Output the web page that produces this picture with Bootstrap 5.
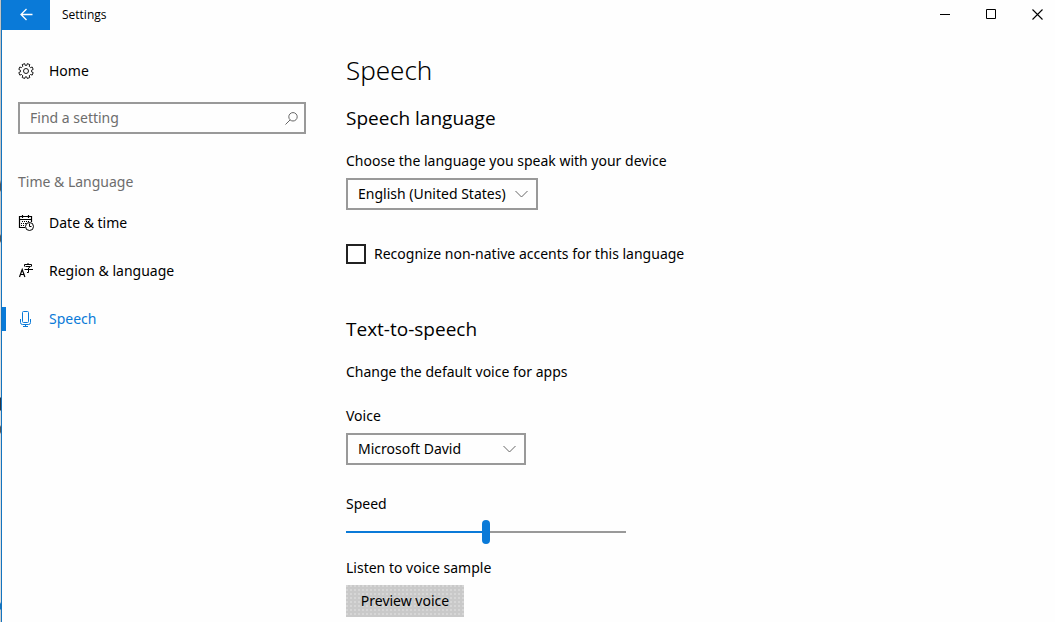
<!DOCTYPE html>
<html lang="en">
<head>
<meta charset="utf-8">
<meta name="viewport" content="width=device-width, initial-scale=1">
<title>Settings</title>
<link href="https://cdn.jsdelivr.net/npm/bootstrap@5.3.0/dist/css/bootstrap.min.css" rel="stylesheet">
<style>
:root { --accent: #0a7ad8; --edge: #999; }
body { font-family: "Noto Sans", "Open Sans", sans-serif; font-size: 14px; line-height: 20px; color: #000; background: #fff; overflow: hidden; }
.window { border-left: 1px solid #1474bf; margin-left: 1px; background: #fefefe; }
.desktop-edge { background: linear-gradient(#c4c4c4 0 180px, #555 184px 190px, #c4c4c4 192px 234px, #555 236px 241px, #ddd 243px 397px, #2a3442 398px 410px, #ddd 411px 425px, #555 427px 432px, #ddd 434px 602px, #1474bf 604px 609px, #ccc 610px); }
.titlebar { height: 30px; font-family: "Open Sans", "Noto Sans", sans-serif; font-size: 12px; }
.back { width: 48px; background: var(--accent); }
.caption { width: 46px; }
.plain { border: 0; padding: 0 0 2px; background: transparent; color: #000; }
.back.plain { background: var(--accent); color: #fff; }
.sidebar { width: 320px; padding: 17px 16px 0; }
.side-link { height: 48px; padding: 0 16px; margin: 0 -16px; gap: 15px; color: #000; text-decoration: none; border-radius: 0; }
.side-link.current { color: var(--accent); position: relative; }
.side-link.current::before { content: ""; position: absolute; left: 0; top: 12px; width: 4px; height: 24px; background: var(--accent); }
.search { height: 32px; border: 2px solid var(--edge); margin: 7px 0 38px; padding: 0 6px 0 10px; }
.search input { border: 0; padding: 0; background: transparent; border-radius: 0; font-size: 14px; line-height: 20px; }
.search input:focus { box-shadow: none; }
.search input::placeholder { color: #6d6d6d; opacity: 1; }
.group-name { font-size: 14px; line-height: 20px; font-weight: 400; color: #6d6d6d; margin: 0 0 7px; }
.content-pane { padding: 22px 24px 5px; }
h1 { font-size: 26px; line-height: 36px; font-weight: 300; margin: 0 0 16px; }
h2 { font-family: "Open Sans", "Noto Sans", sans-serif; font-size: 19px; line-height: 28px; font-weight: 400; margin: 0 0 19px; }
.caption-text { display: block; margin: 0 0 7px; }
.picker { height: 32px; border: 2px solid var(--edge); border-radius: 0; padding: 0 28px 0 10px; font-size: 14px; line-height: 20px; color: #000; background-color: transparent; background-position: right 8px center; background-size: 13px 8px;
  background-image: url("data:image/svg+xml,%3Csvg xmlns='http://www.w3.org/2000/svg' viewBox='0 0 13 8'%3E%3Cpath d='M.5 1l6 6 6-6' fill='none' stroke='%23666'/%3E%3C/svg%3E"); }
.picker-language { width: 192px; }
.picker-voice { width: 180px; margin-bottom: 29px; }
.accent-check { gap: 8px; margin: 34px 0 51px; }
.accent-check .form-check-input { width: 20px; height: 20px; margin: 0; border: 2px solid #222; border-radius: 0; }
.speed { -webkit-appearance: none; appearance: none; display: block; width: 280px; height: 24px; margin: 0 0 14px; background: linear-gradient(to right, var(--accent) var(--level), var(--edge) var(--level)) center / 100% 2px no-repeat; }
.speed-label { margin-bottom: 6px; }
.speed::-webkit-slider-thumb { -webkit-appearance: none; width: 8px; height: 24px; border-radius: 4px; background: var(--accent); }
.speed::-moz-range-thumb { width: 8px; height: 24px; border: 0; border-radius: 4px; background: var(--accent); }
.preview { height: 32px; width: 118px; padding: 0; border: 0; border-radius: 0; font-size: 14px; line-height: 20px; color: #000; background: radial-gradient(circle at 1px 1px, #d6d6d6 1px, transparent 1px) 0 0 / 4px 4px #c9c9c9; }
</style>
</head>
<body class="desktop-edge">
<div class="window min-vh-100 d-flex flex-column">
  <header class="titlebar d-flex align-items-stretch">
    <button type="button" class="back plain d-flex align-items-center justify-content-center" aria-label="Back">
      <svg width="13" height="13" viewBox="0 0 13 13" fill="none" stroke="currentColor" stroke-width="1.3"><path d="M12.500 6.500H1M6.500 1L1 6.500l5.500 5.500"/></svg>
    </button>
    <span class="align-self-center ms-2 ps-1 me-auto pb-0">Settings</span>
    <button type="button" class="caption plain" aria-label="Minimize"><svg class="d-block ms-auto" width="11" height="11" viewBox="0 0 11 11"><path d="M0 5.500h10" stroke="#000"/></svg></button>
    <button type="button" class="caption plain" aria-label="Maximize"><svg class="d-block ms-auto" width="11" height="11" viewBox="0 0 11 11"><path d="M.5.5h9v9h-9z" fill="none" stroke="#000"/></svg></button>
    <button type="button" class="caption plain me-2" aria-label="Close"><svg class="d-block ms-auto" width="11" height="11" viewBox="0 0 11 11"><path d="M.5.5l10 10m0-10l-10 10" stroke="#000" stroke-width="1.100"/></svg></button>
    <span class="pe-1"></span>
  </header>
  <div class="d-flex flex-grow-1">
    <aside class="sidebar flex-shrink-0">
      <a href="#" class="side-link d-flex align-items-center">
        <svg width="16" height="16" viewBox="0 0 16 16" fill="none" stroke="currentColor" stroke-width=".9"><path d="M6.700.6l.4 1.700h1.800l.4-1.700 2.500 1-.6 1.700 1.300 1.300 1.700-.6 1 2.400-1.600.8v1.700l1.600.7-1 2.500-1.700-.6-1.300 1.300.6 1.700-2.500 1-.5-1.600H7.200l-.5 1.600-2.500-1 .6-1.700-1.300-1.300-1.700.6-1-2.500 1.600-.7V7.200L.8 6.400l1-2.400 1.700.6 1.300-1.300-.6-1.700z"/><circle cx="8" cy="8" r="2.500"/></svg>
        Home
      </a>
      <div class="search d-flex align-items-center" role="search">
        <input type="text" class="form-control shadow-none" placeholder="Find a setting" aria-label="Find a setting">
        <svg class="flex-shrink-0" width="13" height="13" viewBox="0 0 13 13" fill="none" stroke="#666"><circle cx="8" cy="4.800" r="4.200"/><path d="M5 8L.5 12.500"/></svg>
      </div>
      <h3 class="group-name">Time &amp; Language</h3>
      <nav aria-label="Time &amp; Language">
        <a href="#" class="side-link d-flex align-items-center">
          <svg width="16" height="16" viewBox="0 0 16 16" fill="none" stroke="currentColor"><path d="M7 12.500H1.500v-11h12V7M1.500 4.500h12M4.500 0v3M10.500 0v3" stroke-width="1.200"/><path d="M4 6.500h8M3 8.500h5M3 10.500h4" stroke-dasharray="1 1"/><circle cx="11.500" cy="11.500" r="4"/><path d="M11.500 8.500v3h2"/></svg>
          Date &amp; time
        </a>
        <a href="#" class="side-link d-flex align-items-center">
          <svg width="16" height="16" viewBox="0 0 16 16" fill="none" stroke="currentColor"><path d="M1.500 14L4.200 6.500 6.900 14M2.500 11.500h3.600" stroke-width="1.200"/><path d="M6.500 3.500v-2h7v2M10 0v1.500M7.500 3.500h5L10.500 5M6.500 6.500h8.500M10.500 5v4.500H9"/></svg>
          Region &amp; language
        </a>
        <a href="#" class="side-link current d-flex align-items-center" aria-current="page">
          <svg width="16" height="16" viewBox="0 0 16 16" fill="none" stroke="currentColor"><rect x="4.500" y=".5" width="6" height="11" rx="1"/><path d="M2.500 8v3.500q0 2 2 2h6q2 0 2-2V8M7.500 13.500v2M5 15.500h5"/></svg>
          Speech
        </a>
      </nav>
    </aside>
    <main class="content-pane flex-grow-1">
      <h1>Speech</h1>
      <h2>Speech language</h2>
      <label class="caption-text" for="language">Choose the language you speak with your device</label>
      <select id="language" class="form-select picker picker-language"><option>English (United States)</option></select>
      <div class="accent-check d-flex align-items-center">
        <input type="checkbox" class="form-check-input" id="accents">
        <label for="accents">Recognize non-native accents for this language</label>
      </div>
      <h2>Text-to-speech</h2>
      <p class="mb-4">Change the default voice for apps</p>
      <label class="caption-text" for="voice">Voice</label>
      <select id="voice" class="form-select picker picker-voice"><option>Microsoft David</option></select>
      <label class="caption-text speed-label" for="speed">Speed</label>
      <input type="range" class="speed" id="speed" min="0" max="100" value="50" style="--level: 50%">
      <label class="caption-text" for="preview">Listen to voice sample</label>
      <button type="button" class="btn preview" id="preview">Preview voice</button>
    </main>
  </div>
</div>
<script src="https://cdn.jsdelivr.net/npm/bootstrap@5.3.0/dist/js/bootstrap.bundle.min.js"></script>
</body>
</html>
